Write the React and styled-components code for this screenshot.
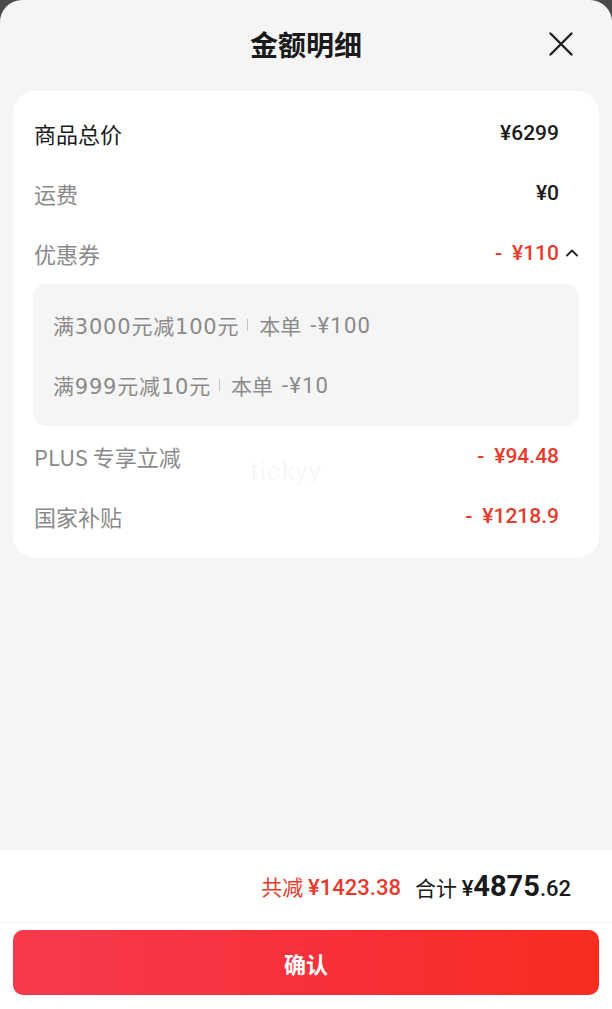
import styled, { createGlobalStyle } from "styled-components";

const GlobalStyle = createGlobalStyle`
  html, body {
    margin: 0;
    padding: 0;
    background: #4a4a4a;
  }
  body {
    font-family: "Noto Sans CJK SC", "Noto Sans", sans-serif;
  }
`;

const Sheet = styled.div`
  width: 612px;
  height: 1009px;
  background: #f5f5f5;
  border-radius: 22px 22px 0 0;
  display: flex;
  flex-direction: column;
  overflow: hidden;
`;

const Header = styled.div`
  height: 91px;
  display: flex;
  align-items: center;
  justify-content: center;
  position: relative;
`;

const Title = styled.h1`
  margin: 0 0 4px;
  font-size: 28px;
  font-weight: 700;
  color: #1a1a1a;
`;

const CloseButton = styled.button`
  position: absolute;
  right: 39px;
  top: 32px;
  width: 24px;
  height: 24px;
  padding: 0;
  border: none;
  background: none;
`;

const Card = styled.div`
  margin: 0 13px;
  background: #fff;
  border-radius: 22px;
  padding: 12px 20px 12px;
  position: relative;
`;

const Row = styled.div`
  height: 60px;
  display: flex;
  align-items: center;
  justify-content: space-between;
  padding: 0 20px 0 1px;
`;

const Label = styled.span`
  font-size: 22px;
  color: ${(p) => (p.$strong ? "#1a1a1a" : "#8a8a8a")};
`;

const Value = styled.span`
  font-family: "Roboto", "Noto Sans CJK SC", sans-serif;
  font-size: 21px;
  font-weight: 500;
  color: ${(p) => (p.$red ? "#e8392b" : "#1a1a1a")};
  display: flex;
  align-items: center;
  gap: 6px;
`;

const Minus = styled.span`
  margin-right: 10px;
`;

const Chevron = styled.svg`
  margin-right: -20px;
`;

const CouponBox = styled.div`
  background: #f5f5f5;
  border-radius: 14px;
  padding: 11px 20px;
  margin-top: 1px;
  display: flex;
  flex-direction: column;
`;

const CouponLine = styled.div`
  height: 60px;
  display: flex;
  align-items: center;
  font-size: 21px;
  color: #8a8a8a;
`;

const Rule = styled.span`
  font-family: "DejaVu Sans", "Noto Sans CJK SC", sans-serif;
  letter-spacing: 0.8px;
`;

const Sep = styled.span`
  display: inline-block;
  width: 1px;
  height: 12px;
  background: #c4c4c4;
  margin: 0 11px 0 8px;
`;

const Amount = styled.span`
  font-family: "Roboto", "Noto Sans CJK SC", sans-serif;
  font-size: 22px;
  font-weight: 400;
  letter-spacing: 1.2px;
  margin-left: 9px;
`;

const Watermark = styled.span`
  position: absolute;
  left: 237px;
  top: 365px;
  font-family: "Roboto", sans-serif;
  font-size: 26px;
  letter-spacing: 1px;
  color: rgba(0, 0, 0, 0.05);
  pointer-events: none;
`;

const Spacer = styled.div`
  flex: 1;
`;

const Footer = styled.div`
  background: #fff;
  display: flex;
  flex-direction: column;
`;

const Summary = styled.div`
  height: 72px;
  display: flex;
  align-items: center;
  justify-content: flex-end;
  padding-right: 41px;
  border-bottom: 1px solid #f0f0f0;
`;

const Saved = styled.span`
  font-size: 21px;
  color: #e8392b;
  margin-right: 14px;
  display: flex;
  align-items: baseline;
`;

const Num = styled.span`
  font-family: "Roboto", "Noto Sans CJK SC", sans-serif;
  font-size: ${(p) => p.$size || 22}px;
  font-weight: ${(p) => p.$weight || 500};
`;

const Total = styled.span`
  font-size: 21px;
  color: #1a1a1a;
  display: flex;
  align-items: baseline;
`;

const ButtonArea = styled.div`
  padding: 7px 13px 14px;
`;

const ConfirmButton = styled.button`
  width: 100%;
  height: 65px;
  border: none;
  border-radius: 10px;
  background: linear-gradient(90deg, #f63a4c 0%, #f7303a 55%, #f82d1f 100%);
  color: #fff;
  font-family: "Noto Sans CJK SC", sans-serif;
  font-size: 22px;
  font-weight: 700;
`;

const coupons = [
  { rule: "满3000元减100元", amount: "-¥100" },
  { rule: "满999元减10元", amount: "-¥10" },
];

const discounts = [
  { label: "PLUS 专享立减", amount: "¥94.48" },
  { label: "国家补贴", amount: "¥1218.9" },
];

export default function App() {
  return (
    <>
      <GlobalStyle />
      <Sheet>
        <Header>
          <Title>金额明细</Title>
          <CloseButton aria-label="关闭">
            <svg width="24" height="24" viewBox="0 0 24 24">
              <path
                d="M1.5 1.5 L22.5 22.5 M22.5 1.5 L1.5 22.5"
                stroke="#1f1f1f"
                strokeWidth="2.4"
                strokeLinecap="round"
              />
            </svg>
          </CloseButton>
        </Header>

        <Card>
          <Row>
            <Label $strong>商品总价</Label>
            <Value>¥6299</Value>
          </Row>
          <Row>
            <Label>运费</Label>
            <Value>¥0</Value>
          </Row>
          <Row>
            <Label>优惠券</Label>
            <Value $red>
              <span>
                <Minus>-</Minus>¥110
              </span>
              <Chevron width="14" height="10" viewBox="0 0 14 10">
                <path
                  d="M2 7.5 L7 2.5 L12 7.5"
                  stroke="#1f1f1f"
                  strokeWidth="1.8"
                  fill="none"
                  strokeLinecap="round"
                  strokeLinejoin="round"
                />
              </Chevron>
            </Value>
          </Row>
          <CouponBox>
            {coupons.map((c) => (
              <CouponLine key={c.rule}>
                <Rule>{c.rule}</Rule>
                <Sep />
                本单
                <Amount>{c.amount}</Amount>
              </CouponLine>
            ))}
          </CouponBox>
          {discounts.map((d) => (
            <Row key={d.label}>
              <Label>{d.label}</Label>
              <Value $red>
                <span>
                  <Minus>-</Minus>
                  {d.amount}
                </span>
              </Value>
            </Row>
          ))}
          <Watermark>tickyy</Watermark>
        </Card>

        <Spacer />

        <Footer>
          <Summary>
            <Saved>
              共减&nbsp;<Num>¥1423.38</Num>
            </Saved>
            <Total>
              合计&nbsp;<Num>¥</Num>
              <Num $size={29} $weight={700}>
                4875
              </Num>
              <Num $size={22}>.62</Num>
            </Total>
          </Summary>
          <ButtonArea>
            <ConfirmButton>确认</ConfirmButton>
          </ButtonArea>
        </Footer>
      </Sheet>
    </>
  );
}
